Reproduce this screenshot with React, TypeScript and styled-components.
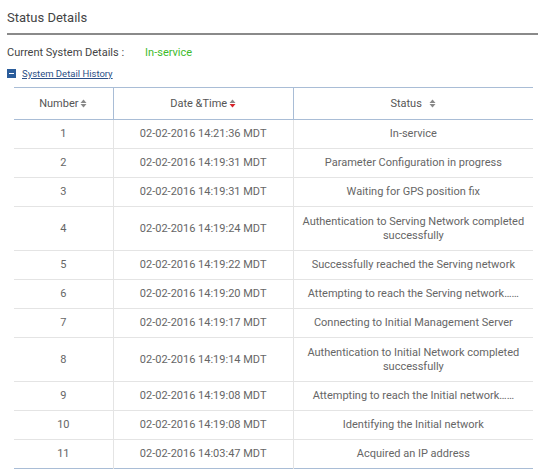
import React from "react";
import styled, { createGlobalStyle } from "styled-components";

const G = createGlobalStyle`
  body { margin: 0; background: #fff; font-family: Roboto, "Liberation Sans", sans-serif; color: #555; }
`;
const Page = styled.div` padding: 0 2px 0 7px; width: 540px; box-sizing: border-box; `;
const Title = styled.div`
  font-size: 13px; color: #444; padding: 10px 0 8px 0; border-bottom: 2px solid #8a8a8a;
`;
const Cur = styled.div` display: flex; font-size: 11px; padding: 8px 0 0 0; height: 18px; align-items: center; color: #444;`;
const Green = styled.span` color: #3dbb2c; margin-left: 21px; `;
const Hist = styled.div` display: flex; align-items: center; gap: 6px; margin-top: 7px; font-size: 9.5px; `;
const Box = styled.span`
  width: 9px; height: 9px; background: #2b5d9b; display: inline-flex; align-items: center; justify-content: center;
  &::after { content: ""; width: 5px; height: 1.5px; background: #fff; }
`;
const Link = styled.a` color: #2b4f86; text-decoration: underline; `;
const Table = styled.table`
  margin: 8px 0 0 7px; width: 519px; border-collapse: collapse; font-size: 11px;
  border-top: 1px solid #a9bdd6; border-bottom: 1px solid #a9bdd6;
`;
const Th = styled.th<{ w: number }>`
  width: ${p => p.w}px; height: 29px; font-weight: normal; color: #555; border-bottom: 1px solid #a9bdd6;
  & + & { border-left: 1px solid #a9bdd6; }
`;
const Td = styled.td<{ tall?: boolean }>`
  text-align: center; height: ${p => (p.tall ? 43 : 28)}px; border-top: 1px solid #e4e4e4; padding: 0 6px; line-height: 14px; color: #666;
  & + & { border-left: 1px solid #e4e4e4; }
`;
const Sort = ({ red }: { red?: boolean }) => (
  <svg width="7" height="9" viewBox="0 0 7 9" style={{ marginLeft: 2, verticalAlign: "-1px" }}>
    <path d="M0.5 4L3.5 0.5L6.5 4Z" fill="#888" />
    <path d="M0.5 5L3.5 8.5L6.5 5Z" fill={red ? "#d8232a" : "#888"} />
  </svg>
);
const rows: [string, string, string][] = [
  ["1", "14:21:36", "In-service"],
  ["2", "14:19:31", "Parameter Configuration in progress"],
  ["3", "14:19:31", "Waiting for GPS position fix"],
  ["4", "14:19:24", "Authentication to Serving Network completed successfully"],
  ["5", "14:19:22", "Successfully reached the Serving network"],
  ["6", "14:19:20", "Attempting to reach the Serving network……"],
  ["7", "14:19:17", "Connecting to Initial Management Server"],
  ["8", "14:19:14", "Authentication to Initial Network completed successfully"],
  ["9", "14:19:08", "Attempting to reach the Initial network……"],
  ["10", "14:19:08", "Identifying the Initial network"],
  ["11", "14:03:47", "Acquired an IP address"],
];
export default function App() {
  return (
    <Page>
      <G />
      <Title>Status Details</Title>
      <Cur>Current System Details :<Green>In-service</Green></Cur>
      <Hist><Box /><Link>System Detail History</Link></Hist>
      <Table>
        <thead>
          <tr>
            <Th w={98}>Number<Sort /></Th>
            <Th w={180}>Date &amp;Time<Sort red /></Th>
            <Th w={241}>Status&nbsp;&nbsp;<Sort /></Th>
          </tr>
        </thead>
        <tbody>
          {rows.map(([n, t, s]) => {
            const tall = s.length > 50;
            return (
              <tr key={n}>
                <Td tall={tall}>{n}</Td>
                <Td tall={tall}>02-02-2016 {t} MDT</Td>
                <Td tall={tall}>{s}</Td>
              </tr>
            );
          })}
        </tbody>
      </Table>
    </Page>
  );
}
